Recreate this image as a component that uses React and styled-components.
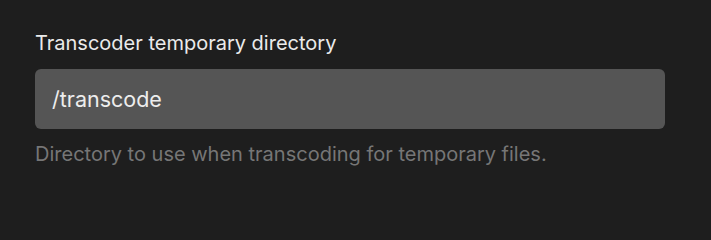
import React, { useState } from 'react';
import styled, { createGlobalStyle } from 'styled-components';

const GlobalStyle = createGlobalStyle`
  html, body {
    margin: 0;
    padding: 0;
    background: #1e1e1e;
  }
  body {
    font-family: Inter, "Noto Sans", "Liberation Sans", sans-serif;
    -webkit-font-smoothing: antialiased;
  }
`;

const Page = styled.div`
  width: 711px;
  height: 200px;
  box-sizing: border-box;
  padding: 31px 46px 0 35px;
  background: #1e1e1e;
`;

const Field = styled.div`
  display: flex;
  flex-direction: column;
`;

const Label = styled.label`
  font-size: 20px;
  line-height: 25px;
  font-weight: 400;
  color: #ebebeb;
`;

const TextInput = styled.input`
  margin-top: 12.5px;
  height: 60px;
  box-sizing: border-box;
  padding: 0 17px;
  border: none;
  border-radius: 6px;
  background: #555555;
  color: #ededed;
  font-family: inherit;
  font-size: 21.5px;
  outline: none;
`;

const Hint = styled.p`
  margin: 13.5px 0 0;
  font-size: 20px;
  line-height: 25px;
  color: #767676;
`;

export default function App() {
  const [dir, setDir] = useState('/transcode');
  return (
    <>
      <GlobalStyle />
      <Page>
        <Field>
          <Label htmlFor="transcode-dir">Transcoder temporary directory</Label>
          <TextInput
            id="transcode-dir"
            value={dir}
            onChange={e => setDir(e.target.value)}
          />
          <Hint>Directory to use when transcoding for temporary files.</Hint>
        </Field>
      </Page>
    </>
  );
}
